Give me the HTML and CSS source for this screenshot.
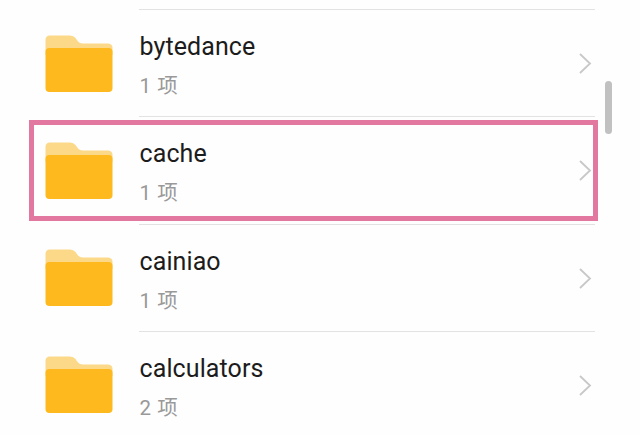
FILE: index.html
```
<!DOCTYPE html>
<html lang="zh-CN">

<head>
<meta charset="utf-8">
<title>文件</title>
<link rel="stylesheet" href="styles.css">
</head>

<body>

<!-- folder and arrow shapes, reused by every row -->
<svg class="shapes">
<symbol id="folder" viewBox="0 0 68 58">
<path fill="#fbd988" d="M0.5 16V5Q0.5 0.5 5 0.5H25Q28.5 0.5 30.5 3L33 6.5Q34.5 8.5 38 8.5H62.5Q67.5 8.5 67.5 13V20H0.5Z"/>
<rect fill="#fdb91d" x="0.5" y="13" width="67" height="44" rx="4"/>
</symbol>
<symbol id="arrow" viewBox="0 0 14 22">
<path fill="none" stroke="#c8c8c8" stroke-width="1.8" d="M1 1L11 10.5L1 20"/>
</symbol>
</svg>

<div class="list">

<div class="row">
<svg class="folder"><use href="#folder"/></svg>
<div class="info">
<div class="text">
<div class="name">bytedance</div>
<div class="count">1 项</div>
</div>
<svg class="arrow"><use href="#arrow"/></svg>
</div>
</div>

<div class="row marked">
<svg class="folder"><use href="#folder"/></svg>
<div class="info">
<div class="text">
<div class="name">cache</div>
<div class="count">1 项</div>
</div>
<svg class="arrow"><use href="#arrow"/></svg>
</div>
</div>

<div class="row">
<svg class="folder"><use href="#folder"/></svg>
<div class="info">
<div class="text">
<div class="name">cainiao</div>
<div class="count">1 项</div>
</div>
<svg class="arrow"><use href="#arrow"/></svg>
</div>
</div>

<div class="row">
<svg class="folder"><use href="#folder"/></svg>
<div class="info">
<div class="text">
<div class="name">calculators</div>
<div class="count">2 项</div>
</div>
<svg class="arrow"><use href="#arrow"/></svg>
</div>
</div>

</div>

<div class="scrollbar"></div>

</body>
</html>
```
FILE: styles.css
```
body {
    margin: 0;
    height: 435px;
    overflow: hidden;
    position: relative;
    background: #fefefe;
    font-family: Roboto, "Noto Sans CJK SC", sans-serif;
}

.shapes {
    display: none;
}

.list {
    padding: 9px 45px 0 45px;
}

.row {
    position: relative;
    display: flex;
    gap: 26px;
    height: 107.3px;
}

.folder {
    flex: none;
    width: 68px;
    height: 58px;
    margin-top: 25.5px;
}

.info {
    flex: 1;
    display: flex;
    justify-content: space-between;
    border-top: 1px solid #e2e2e2;
}

.text {
    padding-top: 22px;
    padding-left: 0.5px;
}

.name {
    font-size: 25px;
    line-height: 30px;
    letter-spacing: 0.1px;
    color: #1c1c1c;
}

.count {
    margin-top: 11px;
    font-size: 20.5px;
    line-height: 26px;
    letter-spacing: 0.6px;
    color: #999;
}

.arrow {
    width: 14px;
    height: 22px;
    margin-top: 43px;
    margin-right: 2px;
}

/* pink frame around the chosen folder */
.marked::after {
    content: '';
    position: absolute;
    top: 4px;
    left: -16px;
    right: -3px;
    height: 91px;
    border: 5px solid #e2789f;
}

.scrollbar {
    position: absolute;
    top: 81px;
    left: 605px;
    width: 7px;
    height: 53px;
    border-radius: 4px;
    background: #c1c1c1;
}
```
